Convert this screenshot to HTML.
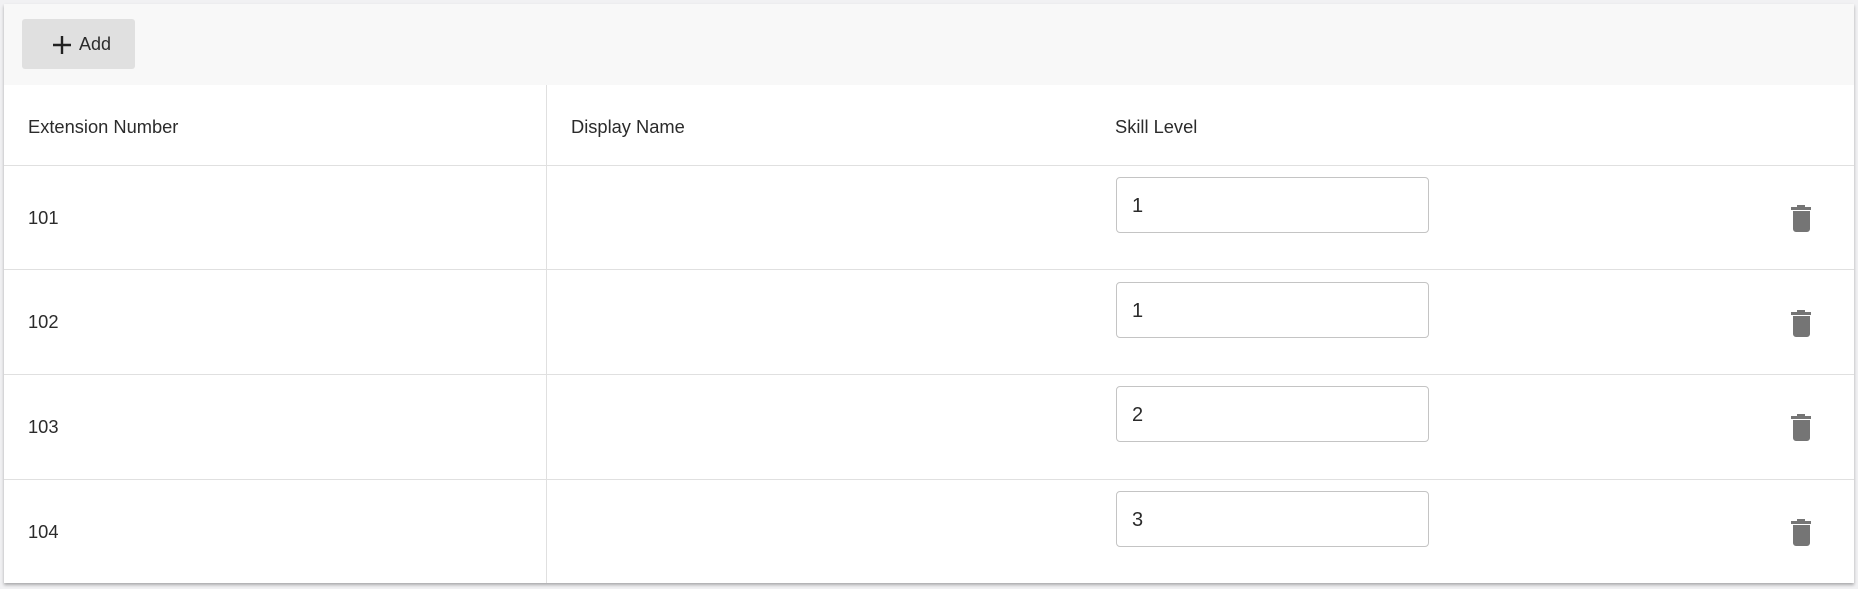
<!DOCTYPE html>
<html><head><style>
body{margin:0;width:1858px;height:589px;background:#f1f1f3;font-family:"Liberation Sans",sans-serif;color:#2b2b2b;position:relative;overflow:hidden}
.card{position:absolute;left:4px;top:4px;width:1850px;height:579px;background:#fff;box-shadow:0 2px 3px rgba(0,0,0,.3)}
.tb{position:absolute;left:0;top:0;width:100%;height:81px;background:#f8f8f8}
.btn{position:absolute;left:18px;top:15px;width:113px;height:50px;background:#e0e0e0;border-radius:3px;font-size:18px;line-height:50px}
.btn svg{position:absolute;left:30px;top:16px}
.btn span{position:absolute;left:57px;top:0}
.hl{position:absolute;left:0;width:100%;height:1px;background:#e0e0e0}
.vl{position:absolute;left:542px;top:81px;width:1px;height:498px;background:#e0e0e0}
.t{position:absolute;font-size:18.3px}
.in{position:absolute;left:1112px;width:313px;height:56px;border:1px solid #c4c4c4;border-radius:4px;box-sizing:border-box;font-size:20px;line-height:56px;padding-left:15px}
.tr{position:absolute;left:1786px}
</style></head><body>
<div class="card">
<div class="tb"><div class="btn"><svg width="20" height="20" viewBox="0 0 20 20"><path d="M10 1v18M1 10h18" stroke="#222" stroke-width="2.4"/></svg><span>Add</span></div></div>
<div class="vl"></div>
<div class="hl" style="top:161px"></div>
<div class="hl" style="top:265px"></div>
<div class="hl" style="top:370px"></div>
<div class="hl" style="top:475px"></div>
<div class="t" style="left:24px;top:112px">Extension Number</div>
<div class="t" style="left:567px;top:112px">Display Name</div>
<div class="t" style="left:1111px;top:112px">Skill Level</div>
<div class="t" style="left:24px;top:203px">101</div>
<div class="t" style="left:24px;top:307px">102</div>
<div class="t" style="left:24px;top:412px">103</div>
<div class="t" style="left:24px;top:517px">104</div>
<div class="in" style="top:173px">1</div>
<div class="in" style="top:278px">1</div>
<div class="in" style="top:382px">2</div>
<div class="in" style="top:487px">3</div>
<svg class="tr" style="top:200px" width="22" height="28" viewBox="0 0 22 28"><path d="M1 3h20v3H1zM7 1h8v2H7zM3 7h17v18a3 3 0 0 1-3 3H6a3 3 0 0 1-3-3z" fill="#757575"/></svg>
<svg class="tr" style="top:305px" width="22" height="28" viewBox="0 0 22 28"><path d="M1 3h20v3H1zM7 1h8v2H7zM3 7h17v18a3 3 0 0 1-3 3H6a3 3 0 0 1-3-3z" fill="#757575"/></svg>
<svg class="tr" style="top:409px" width="22" height="28" viewBox="0 0 22 28"><path d="M1 3h20v3H1zM7 1h8v2H7zM3 7h17v18a3 3 0 0 1-3 3H6a3 3 0 0 1-3-3z" fill="#757575"/></svg>
<svg class="tr" style="top:514px" width="22" height="28" viewBox="0 0 22 28"><path d="M1 3h20v3H1zM7 1h8v2H7zM3 7h17v18a3 3 0 0 1-3 3H6a3 3 0 0 1-3-3z" fill="#757575"/></svg>
</div>
</body></html>
